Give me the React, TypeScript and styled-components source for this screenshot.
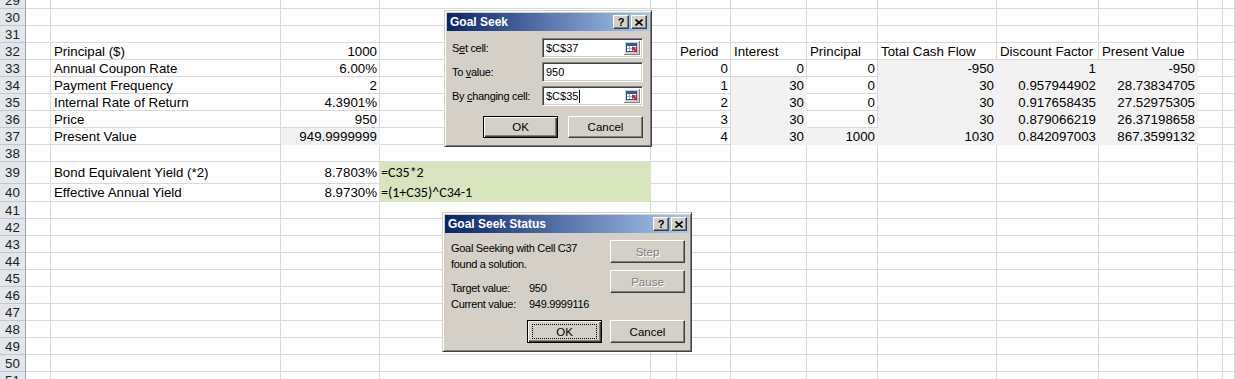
import React from "react";
import styled, { createGlobalStyle, css } from "styled-components";

const GlobalStyle = createGlobalStyle`
    html, body {
        margin: 0;
        padding: 0;
        background: #fff;
        overflow: hidden;
    }
`;

// column widths incl. the 1px gridline: header, A..L, M takes the rest
const colWidths = [26, 25, 230, 99, 271, 26, 54, 76, 71, 119, 102, 99, 25];
const GRID = "#d9d9d9";
const GRAY = "#f2f2f2";
const GREEN = "#d8e4bc";

type Align = "left" | "right";
type CellData = { text: string; align?: Align; fill?: string; formula?: boolean };
type RowData = { n: number; h: number; cells: Record<number, CellData> };

const Page = styled.div`
    position: relative;
    width: 1235px;
    height: 379px;
    overflow: hidden;
    font-family: "Liberation Sans", Arial, sans-serif;
`;

const Sheet = styled.div`
    display: grid;
    grid-template-columns: ${colWidths.map((w) => w + "px").join(" ")} 1fr;
    margin-top: -8px;
`;

const RowHead = styled.div<{ $h: number }>`
    height: ${(p) => p.$h}px;
    box-sizing: border-box;
    background: #e3e6ea;
    border-right: 1px solid #9da3aa;
    border-bottom: 1px solid #c4c8ce;
    display: flex;
    align-items: center;
    justify-content: center;
    font-size: 13.3px;
    color: #222;
`;

const Cell = styled.div<{ $h: number; $align?: Align; $fill?: string; $formula?: boolean }>`
    height: ${(p) => p.$h}px;
    box-sizing: border-box;
    background: ${(p) => p.$fill ?? "#fff"};
    border-right: 1px solid ${(p) => p.$fill ?? GRID};
    border-bottom: 1px solid ${(p) => p.$fill ?? GRID};
    padding: 0 2px 0 3px;
    display: flex;
    align-items: center;
    justify-content: ${(p) => (p.$align === "right" ? "flex-end" : "flex-start")};
    white-space: nowrap;
    overflow: hidden;
    font-size: 13.3px;
    color: #000;
    ${(p) =>
        p.$formula &&
        css`
            padding-left: 1px;
            font-family: "Carlito", "Lato", sans-serif;
            font-size: 14px;
        `}
`;

const Window = styled.div<{ $left: number; $top: number; $width: number; $height: number }>`
    position: absolute;
    left: ${(p) => p.$left}px;
    top: ${(p) => p.$top}px;
    width: ${(p) => p.$width}px;
    height: ${(p) => p.$height}px;
    box-sizing: border-box;
    background: #d4d0c8;
    border: 1px solid;
    border-color: #d4d0c8 #404040 #404040 #d4d0c8;
    box-shadow: inset 1px 1px #fff, inset -1px -1px #808080;
    padding: 2px;
    display: flex;
    flex-direction: column;
    font-family: "Liberation Sans", Tahoma, sans-serif;
    font-size: 11px;
    letter-spacing: -0.3px;
    color: #000;
`;

const TitleBar = styled.div`
    height: 18px;
    flex: none;
    background: linear-gradient(to right, #0a246a, #a6caf0);
    display: flex;
    align-items: center;
    padding: 0 2px 0 3px;
`;

const Title = styled.span`
    flex: 1;
    color: #fff;
    font-weight: bold;
    font-size: 12px;
    letter-spacing: 0;
`;

const CaptionButton = styled.div`
    width: 16px;
    height: 14px;
    box-sizing: border-box;
    background: #d4d0c8;
    border: 1px solid;
    border-color: #fff #404040 #404040 #fff;
    box-shadow: inset -1px -1px #808080;
    display: flex;
    align-items: center;
    justify-content: center;
    font-size: 11px;
    font-weight: bold;
    letter-spacing: 0;
    & + & {
        margin-left: 2px;
    }
`;

const SeekBody = styled.div`
    padding: 7px 6px 0 5px;
    display: grid;
    grid-template-columns: 90px 101px;
    row-gap: 4px;
    align-items: center;
`;

const Field = styled.div`
    height: 20px;
    box-sizing: border-box;
    background: #fff;
    border: 1px solid;
    border-color: #808080 #fff #fff #808080;
    box-shadow: inset 1px 1px #404040, inset -1px -1px #d4d0c8;
    display: flex;
    align-items: center;
    padding: 0 2px 0 3px;
    letter-spacing: 0;
`;

const FieldText = styled.span`
    flex: 1;
    display: flex;
    align-items: center;
`;

const Caret = styled.span`
    width: 1px;
    height: 13px;
    background: #000;
    margin-left: 1px;
`;

const ButtonRow = styled.div<{ $gap: number }>`
    grid-column: 1 / -1;
    display: flex;
    justify-content: flex-end;
    gap: ${(p) => p.$gap}px;
`;

const PushButton = styled.div<{ $default?: boolean; $disabled?: boolean; $h?: number }>`
    width: 75px;
    height: ${(p) => p.$h ?? 23}px;
    box-sizing: border-box;
    background: #d4d0c8;
    border: 1px solid;
    border-color: #fff #404040 #404040 #fff;
    box-shadow: inset -1px -1px #808080;
    display: flex;
    align-items: center;
    justify-content: center;
    font-size: 11.5px;
    letter-spacing: 0;
    color: ${(p) => (p.$disabled ? "#808080" : "#000")};
    text-shadow: ${(p) => (p.$disabled ? "1px 1px #fff" : "none")};
    ${(p) =>
        p.$default &&
        css`
            border-color: #000;
            box-shadow: inset 1px 1px #fff, inset -1px -1px #404040, inset -2px -2px #808080;
        `}
`;

const FocusRect = styled.span`
    width: 65px;
    height: 15px;
    box-sizing: border-box;
    border: 1px dotted #000;
    display: flex;
    align-items: center;
    justify-content: center;
`;

const StatusBody = styled.div`
    padding: 6px 4px 6px 6px;
    display: grid;
    grid-template-columns: 1fr 75px;
    row-gap: 8px;
`;

const Message = styled.div`
    line-height: 16px;
    padding-top: 1px;
`;

const InfoGrid = styled.div`
    display: grid;
    grid-template-columns: 78px auto;
    margin-top: 8px;
    line-height: 16px;
`;

const SideButtons = styled.div`
    display: flex;
    flex-direction: column;
    gap: 7px;
    padding-top: 1px;
`;

const RefEditIcon = () => (
    <svg width="16" height="14" viewBox="0 0 16 14">
        <rect x="0" y="0" width="16" height="14" fill="#d4d0c8" />
        <path d="M0.5 13V0.5H15" stroke="#fff" fill="none" />
        <path d="M0 13.5H15.5V0" stroke="#808080" fill="none" />
        <rect x="2.5" y="2.5" width="10" height="8" fill="#fff" stroke="#31589c" />
        <rect x="3" y="3" width="9" height="2" fill="#31589c" />
        <path d="M5.5 5v5M8.5 5v5M3 7.5h9" stroke="#9db0d8" />
        <path d="M13 11L9 7" stroke="#d42020" strokeWidth="2" />
        <path d="M8 6h4l-4 4z" fill="#d42020" />
    </svg>
);

const CloseGlyph = () => (
    <svg width="8" height="7" viewBox="0 0 8 7">
        <path d="M0.5 0.5l7 6M7.5 0.5l-7 6" stroke="#000" strokeWidth="1.6" />
    </svg>
);

const TitleButtons = () => (
    <>
        <CaptionButton>?</CaptionButton>
        <CaptionButton>
            <CloseGlyph />
        </CaptionButton>
    </>
);

const R = (text: string, fill?: string): CellData => ({ text, align: "right", fill });
const L = (text: string): CellData => ({ text });

const rows: RowData[] = [];
for (let n = 29; n <= 51; n++) {
    rows.push({ n, h: n === 39 ? 22 : n === 40 ? 18 : 17, cells: {} });
}
const set = (n: number, cells: Record<number, CellData>) => {
    rows[n - 29].cells = cells;
};

set(32, {
    2: L("Principal ($)"),
    3: R("1000"),
    6: L("Period"),
    7: L("Interest"),
    8: L("Principal"),
    9: L("Total Cash Flow"),
    10: L("Discount Factor"),
    11: L("Present Value"),
});
set(33, {
    2: L("Annual Coupon Rate"),
    3: R("6.00%"),
    6: R("0"),
    7: R("0"),
    8: R("0"),
    9: R("-950", GRAY),
    10: R("1", GRAY),
    11: R("-950", GRAY),
});
set(34, {
    2: L("Payment Frequency"),
    3: R("2"),
    6: R("1"),
    7: R("30", GRAY),
    8: R("0"),
    9: R("30", GRAY),
    10: R("0.957944902", GRAY),
    11: R("28.73834705", GRAY),
});
set(35, {
    2: L("Internal Rate of Return"),
    3: R("4.3901%"),
    6: R("2"),
    7: R("30", GRAY),
    8: R("0"),
    9: R("30", GRAY),
    10: R("0.917658435", GRAY),
    11: R("27.52975305", GRAY),
});
set(36, {
    2: L("Price"),
    3: R("950"),
    6: R("3"),
    7: R("30", GRAY),
    8: R("0"),
    9: R("30", GRAY),
    10: R("0.879066219", GRAY),
    11: R("26.37198658", GRAY),
});
set(37, {
    2: L("Present Value"),
    3: R("949.9999999", GRAY),
    6: R("4"),
    7: R("30", GRAY),
    8: R("1000", GRAY),
    9: R("1030", GRAY),
    10: R("0.842097003", GRAY),
    11: R("867.3599132", GRAY),
});
set(39, {
    2: L("Bond Equivalent Yield (*2)"),
    3: R("8.7803%"),
    4: { text: "=C35*2", fill: GREEN, formula: true },
});
set(40, {
    2: L("Effective Annual Yield"),
    3: R("8.9730%"),
    4: { text: "=(1+C35)^C34-1", fill: GREEN, formula: true },
});

const GoalSeekDialog = () => (
    <Window $left={444} $top={10} $width={208} $height={137}>
        <TitleBar>
            <Title>Goal Seek</Title>
            <TitleButtons />
        </TitleBar>
        <SeekBody>
            <span>
                S<u>e</u>t cell:
            </span>
            <Field>
                <FieldText>$C$37</FieldText>
                <RefEditIcon />
            </Field>
            <span>
                To <u>v</u>alue:
            </span>
            <Field>
                <FieldText>950</FieldText>
            </Field>
            <span>
                By <u>c</u>hanging cell:
            </span>
            <Field>
                <FieldText>
                    $C$35
                    <Caret />
                </FieldText>
                <RefEditIcon />
            </Field>
            <ButtonRow $gap={10} style={{ marginTop: 6 }}>
                <PushButton $default $h={22}>
                    OK
                </PushButton>
                <PushButton $h={22}>Cancel</PushButton>
            </ButtonRow>
        </SeekBody>
    </Window>
);

const StatusDialog = () => (
    <Window $left={442} $top={212} $width={250} $height={140}>
        <TitleBar>
            <Title>Goal Seek Status</Title>
            <TitleButtons />
        </TitleBar>
        <StatusBody>
            <div>
                <Message>
                    Goal Seeking with Cell C37
                    <br />
                    found a solution.
                </Message>
                <InfoGrid>
                    <span>Target value:</span>
                    <span>950</span>
                    <span>Current value:</span>
                    <span>949.9999116</span>
                </InfoGrid>
            </div>
            <SideButtons>
                <PushButton $disabled>Step</PushButton>
                <PushButton $disabled>Pause</PushButton>
            </SideButtons>
            <ButtonRow $gap={8}>
                <PushButton $default>
                    <FocusRect>OK</FocusRect>
                </PushButton>
                <PushButton>Cancel</PushButton>
            </ButtonRow>
        </StatusBody>
    </Window>
);

const App = (): JSX.Element => {
    return (
        <React.Fragment>
            <GlobalStyle />
            <Page>
                <Sheet>
                    {rows.map((row) => (
                        <React.Fragment key={row.n}>
                            <RowHead $h={row.h}>{row.n}</RowHead>
                            {Array.from({ length: 13 }, (_, i) => {
                                const c = row.cells[i + 1];
                                return (
                                    <Cell
                                        key={i}
                                        $h={row.h}
                                        $align={c?.align}
                                        $fill={c?.fill}
                                        $formula={c?.formula}
                                    >
                                        {c?.text}
                                    </Cell>
                                );
                            })}
                        </React.Fragment>
                    ))}
                </Sheet>
                <GoalSeekDialog />
                <StatusDialog />
            </Page>
        </React.Fragment>
    );
};

export default App;
